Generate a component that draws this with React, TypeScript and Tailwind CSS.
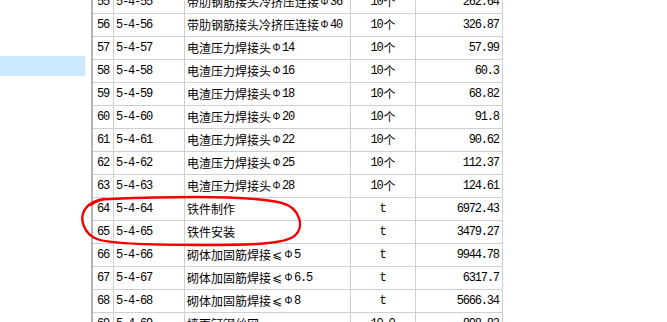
import React from "react";

type Row = { n: string; code: string; name: string; unit: string; val: string };

const rows: Row[] = [
  { n: "55", code: "5-4-55", name: "带肋钢筋接头冷挤压连接φ36", unit: "10个", val: "262.64" },
  { n: "56", code: "5-4-56", name: "带肋钢筋接头冷挤压连接φ40", unit: "10个", val: "326.87" },
  { n: "57", code: "5-4-57", name: "电渣压力焊接头φ14", unit: "10个", val: "57.99" },
  { n: "58", code: "5-4-58", name: "电渣压力焊接头φ16", unit: "10个", val: "60.3" },
  { n: "59", code: "5-4-59", name: "电渣压力焊接头φ18", unit: "10个", val: "68.82" },
  { n: "60", code: "5-4-60", name: "电渣压力焊接头φ20", unit: "10个", val: "91.8" },
  { n: "61", code: "5-4-61", name: "电渣压力焊接头φ22", unit: "10个", val: "90.62" },
  { n: "62", code: "5-4-62", name: "电渣压力焊接头φ25", unit: "10个", val: "112.37" },
  { n: "63", code: "5-4-63", name: "电渣压力焊接头φ28", unit: "10个", val: "124.61" },
  { n: "64", code: "5-4-64", name: "铁件制作", unit: "t", val: "6972.43" },
  { n: "65", code: "5-4-65", name: "铁件安装", unit: "t", val: "3479.27" },
  { n: "66", code: "5-4-66", name: "砌体加固筋焊接≤φ5", unit: "t", val: "9944.78" },
  { n: "67", code: "5-4-67", name: "砌体加固筋焊接≤φ6.5", unit: "t", val: "6317.7" },
  { n: "68", code: "5-4-68", name: "砌体加固筋焊接≤φ8", unit: "t", val: "5666.34" },
  { n: "69", code: "5-4-69", name: "墙面钉钢丝网", unit: "10.0", val: "898.83" },
];

function Txt({ s }: { s: string }) {
  const parts = s.match(/[\x00-\x7F]+|φ|≤|[^\x00-\x7Fφ≤]+/g) || [];
  return (
    <>
      {parts.map((p, i) => {
        if (/^[\x00-\x7F]+$/.test(p)) {
          return (
            <span key={i} className="font-['Liberation_Mono',monospace] tracking-[-1.2px] mr-[1.2px]">
              {p}
            </span>
          );
        }
        if (p === "φ") {
          return (
            <span key={i} className="inline-block w-[11px] text-center font-['Liberation_Sans',sans-serif] text-[10px]">
              Φ
            </span>
          );
        }
        if (p === "≤") {
          return (
            <span key={i} className="inline-block w-[12px] text-center font-['DejaVu_Sans',sans-serif]">
              ⩽
            </span>
          );
        }
        return (
          <span key={i} className="font-['Noto_Sans_CJK_SC',sans-serif]">
            {p}
          </span>
        );
      })}
    </>
  );
}

export default function App() {
  return (
    <div className="relative w-[667px] h-[322px] overflow-hidden bg-white text-black text-[12px] leading-none font-['Noto_Sans_CJK_SC',sans-serif]">
      <div className="flex h-full">
        {/* left panel */}
        <div className="w-[91px] shrink-0 flex flex-col">
          <div className="h-[56px]" />
          <div className="w-[85px] h-[20px] bg-[#cce8ff]" />
        </div>
        {/* table */}
        <div className="w-[412px] shrink-0 border-l-2 border-[#b4b4b4] border-r border-r-[#d0d0d0] overflow-hidden">
          <div className="mt-[-9px] flex flex-col">
            {rows.map((r) => (
              <div key={r.n} className="flex h-[23px] border-b border-[#d0d0d0]">
                <div className="w-[21px] shrink-0 border-r border-[#d0d0d0] flex items-center pl-[4px]">
                  <Txt s={r.n} />
                </div>
                <div className="w-[71px] shrink-0 border-r border-[#d0d0d0] flex items-center pl-[2px]">
                  <Txt s={r.code} />
                </div>
                <div className="w-[166px] shrink-0 border-r border-[#d0d0d0] flex items-center pl-[2px] whitespace-nowrap overflow-hidden">
                  <Txt s={r.name} />
                </div>
                <div className="w-[65px] shrink-0 border-r border-[#d0d0d0] flex items-center justify-center">
                  <Txt s={r.unit} />
                </div>
                <div className="flex-1 flex items-center justify-end pr-[2px]">
                  <Txt s={r.val} />
                </div>
              </div>
            ))}
          </div>
        </div>
        <div className="flex-1" />
      </div>
      {/* red hand-drawn circle */}
      <svg
        className="absolute left-0 top-0 pointer-events-none"
        width="667"
        height="322"
        viewBox="0 0 667 322"
      >
        <path
          d="M 91 205 C 95 201, 100 199, 110 199 C 160 197, 250 195, 282 203 C 300 208, 306 228, 293 237 C 280 245, 240 245, 200 245 C 150 245, 110 244, 97 239 C 84 234, 78 218, 86 208 C 90 203, 96 200, 104 199"
          fill="none"
          stroke="#f00000"
          strokeWidth="2.4"
          strokeLinecap="round"
        />
      </svg>
    </div>
  );
}
